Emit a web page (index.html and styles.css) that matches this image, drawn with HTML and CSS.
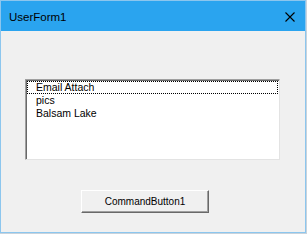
FILE: index.html
```html
<!DOCTYPE html>
<html lang="en">
  <head>
    <meta charset="UTF-8" />
    <meta name="viewport" content="width=device-width, initial-scale=1.0" />
    <title>UserForm1</title>
    <link rel="stylesheet" href="styles.css">
  </head>
  <body>
    <div class="window">
      <!-- 타이틀바 -->
      <div class="title-bar">
        <div class="title">UserForm1</div>
        <div class="close">
          <svg width="10" height="10" viewBox="0 0 10 10">
            <path d="M0.5 0.5 L9.5 9.5 M9.5 0.5 L0.5 9.5" stroke="#000" stroke-width="1.1" fill="none" />
          </svg>
        </div>
      </div>

      <!-- 폼 영역 -->
      <div class="form">
        <ul class="list-box">
          <li class="selected">Email Attach</li>
          <li>pics</li>
          <li>Balsam Lake</li>
        </ul>
        <button class="cmd-button">CommandButton1</button>
      </div>
    </div>
  </body>
</html>
```

FILE: styles.css
```css
body {
  margin: 0;
  background-color: #c9d3dc;
  font-family: "Liberation Sans", Arial, sans-serif;
}
.window {
  width: 304px;
  height: 231px;
  border: 1px solid #8cc6ee;
  background-color: #f0f0f0;
  display: flex;
  flex-direction: column;
}
.title-bar {
  height: 30px;
  background-color: #2aa4ef;
  display: flex;
  align-items: center;
  justify-content: space-between;
}
.title {
  font-size: 11.5px;
  color: #000;
  margin-left: 8px;
  margin-top: 1px;
}
.close {
  width: 10px;
  height: 10px;
  margin-right: 10px;
  margin-top: 1px;
}
.close svg {
  display: block;
}
.form {
  display: flex;
  flex-direction: column;
}
.list-box {
  list-style: none;
  margin: 48px 0 0 24px;
  padding: 1px;
  width: 251px;
  height: 77px;
  background-color: #fff;
  border-top: 1px solid #a0a0a0;
  border-left: 1px solid #a0a0a0;
  border-right: 1px solid #e3e3e3;
  border-bottom: 1px solid #e3e3e3;
  box-shadow: inset 1px 1px 0 #696969;
}
.list-box li {
  font-size: 10.5px;
  line-height: 13px;
  height: 13px;
  padding-left: 9px;
  color: #000;
}
.list-box li.selected {
  outline: 1px dotted #000;
  outline-offset: -1px;
  height: 13px;
}
.cmd-button {
  margin: 30px 0 0 80px;
  width: 128px;
  height: 23px;
  padding: 0;
  font-family: "Liberation Sans", Arial, sans-serif;
  font-size: 10px;
  color: #000;
  background-color: #f0f0f0;
  border: 1px solid;
  border-color: #fff #696969 #696969 #fff;
  box-shadow: inset -1px -1px 0 #a0a0a0;
}
```
